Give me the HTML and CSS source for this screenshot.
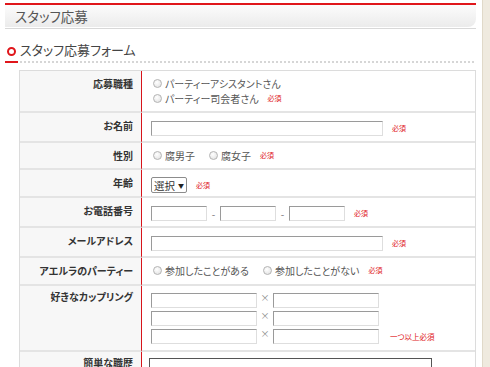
FILE: index.html
```html
<!DOCTYPE html>
<html lang="ja">
<head>
    <meta charset="UTF-8">
    <title>スタッフ応募</title>
    <link rel="stylesheet" href="styles.css">
</head>
<body>
<div class="page">
    <div class="page-head">
        <h1>スタッフ応募</h1>
    </div>
    <h2 class="sec-title"><span class="ring"></span>スタッフ応募フォーム</h2>

    <table class="form-table">
        <tr class="r-job">
            <th>応募職種</th>
            <td>
                <div class="field"><span class="radio"></span><span class="opt">パーティーアシスタントさん</span></div>
                <div class="field"><span class="radio"></span><span class="opt">パーティー司会者さん</span><span class="req">必須</span></div>
            </td>
        </tr>
        <tr class="r-30">
            <th>お名前</th>
            <td class="in">
                <div class="field"><input type="text" class="txt w-long"><span class="req">必須</span></div>
            </td>
        </tr>
        <tr class="r-27">
            <th>性別</th>
            <td>
                <div class="field">
                    <span class="radio"></span><span class="opt gap">腐男子</span>
                    <span class="radio"></span><span class="opt">腐女子</span>
                    <span class="req">必須</span>
                </div>
            </td>
        </tr>
        <tr class="r-28">
            <th>年齢</th>
            <td class="in-sel">
                <div class="field"><span class="sel">選択<span class="arr">▼</span></span><span class="req">必須</span></div>
            </td>
        </tr>
        <tr class="r-30">
            <th>お電話番号</th>
            <td class="in">
                <div class="field">
                    <input type="text" class="txt w-tel"><span class="dash">-</span>
                    <input type="text" class="txt w-tel"><span class="dash">-</span>
                    <input type="text" class="txt w-tel"><span class="req">必須</span>
                </div>
            </td>
        </tr>
        <tr class="r-30">
            <th>メールアドレス</th>
            <td class="in">
                <div class="field"><input type="text" class="txt w-long"><span class="req">必須</span></div>
            </td>
        </tr>
        <tr class="r-28">
            <th>アエルラのパーティー</th>
            <td>
                <div class="field">
                    <span class="radio"></span><span class="opt gap">参加したことがある</span>
                    <span class="radio"></span><span class="opt">参加したことがない</span>
                    <span class="req">必須</span>
                </div>
            </td>
        </tr>
        <tr class="r-couple">
            <th>好きなカップリング</th>
            <td class="in-couple">
                <div class="field"><input type="text" class="txt w-cp"><span class="x">×</span><input type="text" class="txt w-cp"></div>
                <div class="field"><input type="text" class="txt w-cp"><span class="x">×</span><input type="text" class="txt w-cp"></div>
                <div class="field"><input type="text" class="txt w-cp"><span class="x">×</span><input type="text" class="txt w-cp"><span class="req req-cp">一つ以上必須</span></div>
            </td>
        </tr>
        <tr class="r-career">
            <th>簡単な職歴</th>
            <td class="in-area">
                <textarea class="area"></textarea>
            </td>
        </tr>
    </table>
</div>
</body>
</html>
```

FILE: styles.css
```css
*{margin: 0;padding: 0;box-sizing: border-box;}

body{
    background: #efeadf;
    font-family: "Noto Sans CJK JP", "Noto Sans", sans-serif;
    font-feature-settings: "palt";
    color: #555;
}
.page{
    width: 483px;
    min-height: 367px;
    background: #fff;
    padding-top: 3px;
    border-right: 1px solid #e0d9c9;
}

/* page header */
.page-head{
    margin: 0 6px 0 5px;
    padding-bottom: 1px;
    border-bottom: 1px solid #d8d8d8;
}
.page-head h1{
    height: 24px;
    border-top: 2px solid #e0161b;
    border-radius: 0 0 8px 0;
    background: linear-gradient(#fcfcfc, #ebebeb);
    padding-left: 10px;
    font-size: 13.5px;
    font-weight: normal;
    line-height: 22px;
    color: #555;
}

/* section title */
.sec-title{
    position: relative;
    margin: 0 8px 0 5px;
    padding: 11px 0 1px 2px;
    border-bottom: 2px dotted #d6d6d6;
    font-size: 13px;
    font-weight: normal;
    line-height: 20px;
    color: #444;
}
.sec-title:after{
    content: "";
    position: absolute;
    left: 0;
    bottom: -2px;
    width: 13px;
    height: 2px;
    background: #e0161b;
}
.sec-title .ring{
    display: inline-block;
    width: 9px;
    height: 9px;
    border: 2px solid #e0161b;
    border-radius: 50%;
    margin-right: 4px;
    vertical-align: -1px;
}

/* form table */
.form-table{
    margin: 7px 0 0 19px;
    width: 457px;
    border-collapse: separate;
    border-spacing: 0;
    border: 1px solid #dcdcdc;
    border-bottom: 0;
}
.form-table th{
    width: 122px;
    background: #f7f7f7;
    text-align: right;
    vertical-align: top;
    padding: 5px 8px 0 0;
    border-right: 1px solid #d7141b;
    border-bottom: 2px solid #e4e4e4;
    font-size: 10px;
    line-height: 15px;
    color: #333;
}
.form-table td{
    vertical-align: top;
    padding: 5px 0 0 9px;
    border-bottom: 2px solid #e4e4e4;
    font-size: 10px;
    line-height: 15px;
}
.form-table td.in{padding-top: 8px;}
.form-table td.in-sel{padding-top: 7px;}
.form-table td.in-couple{padding-top: 7px;}
.form-table td.in-area{padding: 6px 0 0 7px;}
.form-table .r-couple th{padding-top: 3px;}
.form-table .r-career th{padding-top: 3px;}

.r-job{height: 42px;}
.r-30{height: 30px;}
.r-27{height: 27px;}
.r-28{height: 28px;}
.r-couple{height: 66px;}
.r-career{height: 90px;}

.field{
    display: flex;
    align-items: center;
    white-space: nowrap;
}
.in-couple .field + .field{margin-top: 3px;}

.radio{
    display: inline-block;
    flex: none;
    width: 9px;
    height: 9px;
    margin: 0 3px 0 2px;
    border: 1px solid #b4b4b4;
    border-radius: 50%;
    background: radial-gradient(circle at 40% 35%, #fff, #dedede);
}
.opt{color: #555;}
.opt.gap{margin-right: 12px;}

.req{
    margin-left: 9px;
    font-size: 7px;
    line-height: 9px;
    color: #e0161b;
}
.req-cp{margin-left: 11px;font-size: 7.5px;}

.txt{
    flex: none;
    height: 15px;
    border: 1px solid;
    border-color: #9a9a9a #dedede #dedede #9a9a9a;
    background: #fff;
    outline: none;
    font-size: 11px;
}
.w-long{width: 232px;}
.w-tel{width: 56px;}
.w-cp{width: 106px;}

.dash{
    width: 13px;
    text-align: center;
    color: #777;
    font-size: 10px;
}
.x{
    align-self: flex-start;
    width: 16px;
    text-align: center;
    font-size: 9px;
    line-height: 9px;
    color: #888;
}

.sel{
    display: inline-flex;
    align-items: center;
    flex: none;
    width: 36px;
    height: 16px;
    padding-left: 2px;
    border: 1px solid #8c8c8c;
    border-radius: 2px;
    background: #fff;
    color: #333;
    font-size: 10.5px;
    white-space: nowrap;
}
.sel .arr{
    margin-left: 3px;
    font-size: 6px;
    color: #222;
}

.area{
    display: block;
    width: 283px;
    height: 80px;
    border: 1px solid #555;
    resize: none;
    outline: none;
}
```
